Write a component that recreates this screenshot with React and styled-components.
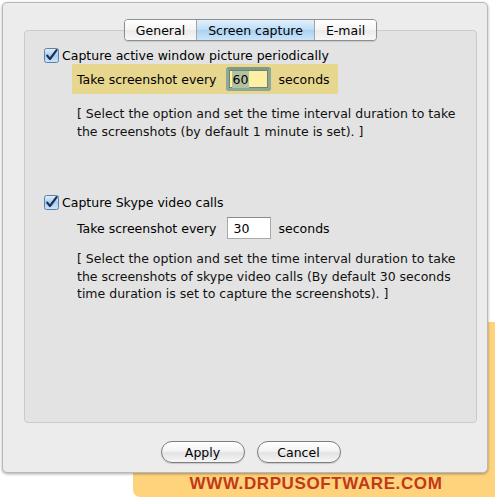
import React from "react";
import styled, { createGlobalStyle } from "styled-components";

const GlobalStyle = createGlobalStyle`
  html, body {
    margin: 0;
    padding: 0;
    background: #ffffff;
  }
  body {
    font-family: "DejaVu Sans", "Liberation Sans", sans-serif;
    font-size: 12.5px;
    color: #111;
  }
`;

const tabs = ["General", "Screen capture", "E-mail"];

function CheckIcon() {
  return (
    <svg width="15" height="15" viewBox="0 0 15 15">
      <defs>
        <linearGradient id="cbg" x1="0" y1="0" x2="0" y2="1">
          <stop offset="0" stopColor="#e4f0fb" />
          <stop offset="0.5" stopColor="#a9cdef" />
          <stop offset="1" stopColor="#cfe6fb" />
        </linearGradient>
      </defs>
      <rect x="0.5" y="0.5" width="14" height="14" rx="2" fill="url(#cbg)" stroke="#5d7fa8" />
      <path d="M3.2 7.6 L6 11 L12.6 2.2" fill="none" stroke="#1b3158" strokeWidth="2.2" strokeLinecap="round" strokeLinejoin="round" />
    </svg>
  );
}

function App() {
  return (
    <>
      <GlobalStyle />
      <Stage>
        <Banner>
          <BannerText>WWW.DRPUSOFTWARE.COM</BannerText>
        </Banner>
        <Window>
          <GroupBox>
            <TabBar>
              {tabs.map((tab) => (
                <Tab key={tab} active={tab === "Screen capture"}>
                  {tab}
                </Tab>
              ))}
            </TabBar>

            <CheckRow>
              <CheckIcon />
              <span>Capture active window picture periodically</span>
            </CheckRow>
            <IntervalRow highlighted>
              <span>Take screenshot every</span>
              <Field focused>
                <Selected>60</Selected>
              </Field>
              <span>seconds</span>
            </IntervalRow>
            <Note>
              [ Select the option and set the time interval duration to take
              <br />
              the screenshots (by default 1 minute is set). ]
            </Note>

            <CheckRow second>
              <CheckIcon />
              <span>Capture Skype video calls</span>
            </CheckRow>
            <IntervalRow>
              <span>Take screenshot every</span>
              <Field>30</Field>
              <span>seconds</span>
            </IntervalRow>
            <Note compact>
              [ Select the option and set the time interval duration to take
              <br />
              the screenshots of skype video calls (By default 30 seconds
              <br />
              time duration is set to capture the screenshots). ]
            </Note>
          </GroupBox>

          <Buttons>
            <PillButton>Apply</PillButton>
            <PillButton>Cancel</PillButton>
          </Buttons>
        </Window>
      </Stage>
    </>
  );
}

const Stage = styled.div`
  position: relative;
  width: 495px;
  height: 497px;
  overflow: hidden;
  padding: 2px 0 0 2px;
  box-sizing: border-box;
`;

const Banner = styled.div`
  position: absolute;
  left: 133px;
  top: 322px;
  right: 0;
  bottom: 0;
  background: #fed37b;
  border-radius: 7px 0 0 7px;
  display: flex;
  align-items: flex-end;
  justify-content: center;
  padding: 0 0 3px 0;
  box-sizing: border-box;
`;

const BannerText = styled.div`
  font-family: "Liberation Sans", Arial, sans-serif;
  font-weight: 700;
  font-size: 17px;
  letter-spacing: 0.6px;
  color: #c2381a;
  margin-left: 4px;
`;

const Window = styled.div`
  position: relative;
  z-index: 1;
  width: 486px;
  height: 471px;
  box-sizing: border-box;
  background: #ececec;
  border: 1px solid #b9b9b9;
  border-radius: 5px;
  box-shadow: 0 1px 3px rgba(0, 0, 0, 0.35);
  display: flex;
  flex-direction: column;
  padding: 27px 10px 0 21px;
`;

const GroupBox = styled.div`
  height: 393px;
  box-sizing: border-box;
  background: #e3e3e3;
  border: 1px solid #cbcbcb;
  border-radius: 4px;
  display: flex;
  flex-direction: column;
  padding: 0 0 0 19px;
`;

const TabBar = styled.div`
  display: flex;
  align-self: center;
  margin: -12px 0 0 -19px;
  height: 22px;
  box-sizing: border-box;
  border: 1px solid #8e8e8e;
  border-radius: 4px;
  overflow: hidden;
  box-shadow: 0 1px 1px rgba(0, 0, 0, 0.12);
`;

const Tab = styled.div`
  display: flex;
  align-items: center;
  justify-content: center;
  padding: 0 11px;
  font-size: 12.5px;
  color: #000;
  background: ${({ active }) =>
    active
      ? "linear-gradient(#e2f0fc, #bcdcf6 50%, #a8d1f3 51%, #cbe6fb)"
      : "linear-gradient(#ffffff, #f4f4f4 50%, #ebebeb 51%, #f7f7f7)"};
  & + & {
    border-left: 1px solid #a4a4a4;
  }
`;

const CheckRow = styled.div`
  display: flex;
  align-items: center;
  gap: 3px;
  height: 18px;
  margin-top: ${({ second }) => (second ? "52px" : "5px")};
  font-size: 12.5px;
  color: #000;
`;

const IntervalRow = styled.div`
  display: flex;
  align-items: center;
  align-self: flex-start;
  gap: 8px;
  height: 30px;
  margin-left: 28px;
  padding: 0 8px 0 5px;
  background: ${({ highlighted }) => (highlighted ? "#e6d68e" : "transparent")};
  border-radius: 2px;
  font-size: 12.5px;
  color: #000;
  margin-top: ${({ highlighted }) => (highlighted ? "0" : "2px")};
`;

const Field = styled.div`
  width: ${({ focused }) => (focused ? "45px" : "44px")};
  height: ${({ focused }) => (focused ? "24px" : "22px")};
  box-sizing: border-box;
  display: flex;
  align-items: center;
  padding-left: ${({ focused }) => (focused ? "5px" : "6px")};
  background: ${({ focused }) => (focused ? "#fdf0a4" : "#ffffff")};
  border: ${({ focused }) => (focused ? "3px solid #8ea796" : "1px solid #a9a9a9")};
  border-top-color: ${({ focused }) => (focused ? "#7f9a88" : "#8a8a8a")};
  border-radius: ${({ focused }) => (focused ? "3px" : "0")};
  box-shadow: ${({ focused }) => (focused ? "inset 0 0 0 1px #6c8575" : "none")};
  font-size: 12.5px;
  margin: ${({ focused }) => (focused ? "0 0 0 1px" : "0 0 0 2px")};
`;

const Selected = styled.span`
  background: #b3c29f;
  padding: 1px;
  margin-left: -2px;
`;

const Note = styled.div`
  margin: ${({ compact }) => (compact ? "7px 0 0 33px" : "11px 0 0 33px")};
  line-height: ${({ compact }) => (compact ? "17.5px" : "18px")};
  font-size: 12.5px;
  color: #111;
`;

const Buttons = styled.div`
  display: flex;
  justify-content: center;
  gap: 12px;
  margin-top: 18px;
`;

const PillButton = styled.button`
  width: 84px;
  height: 22px;
  border: 1px solid #7d7d7d;
  border-radius: 11px;
  background: linear-gradient(#ffffff, #f3f3f3 45%, #e3e3e3 55%, #f6f6f6);
  box-shadow: 0 1px 1px rgba(0, 0, 0, 0.15);
  font-family: "DejaVu Sans", "Liberation Sans", sans-serif;
  font-size: 12.5px;
  color: #000;
  padding: 0;
  cursor: pointer;
`;

export default App;
